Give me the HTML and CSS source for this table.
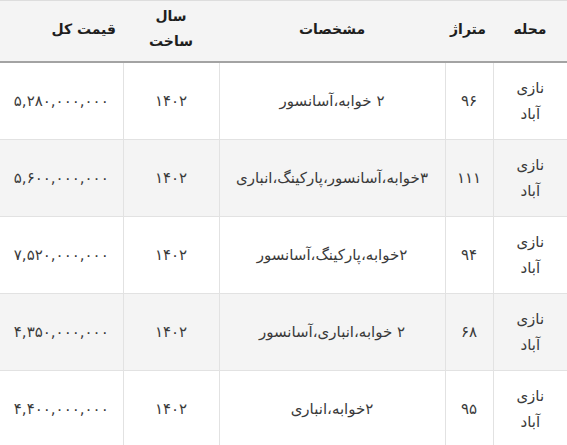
FILE: index.html
```html
<!DOCTYPE html>
<html lang="fa" dir="rtl">
<head>
<meta charset="utf-8">
<link rel="stylesheet" href="styles.css">
</head>
<body>
<table class="price-table">
  <colgroup>
    <col class="c-area">
    <col class="c-size">
    <col class="c-spec">
    <col class="c-year">
    <col class="c-price">
  </colgroup>
  <thead>
    <tr>
      <th>محله</th>
      <th>متراژ</th>
      <th>مشخصات</th>
      <th>سال<br>ساخت</th>
      <th class="th-price">قیمت کل</th>
    </tr>
  </thead>
  <tbody>
    <tr>
      <td>نازی<br>آباد</td>
      <td>۹۶</td>
      <td>۲ خوابه،آسانسور</td>
      <td>۱۴۰۲</td>
      <td>۵,۲۸۰,۰۰۰,۰۰۰</td>
    </tr>
    <tr>
      <td>نازی<br>آباد</td>
      <td>۱۱۱</td>
      <td>۳خوابه،آسانسور،پارکینگ،انباری</td>
      <td>۱۴۰۲</td>
      <td>۵,۶۰۰,۰۰۰,۰۰۰</td>
    </tr>
    <tr>
      <td>نازی<br>آباد</td>
      <td>۹۴</td>
      <td>۲خوابه،پارکینگ،آسانسور</td>
      <td>۱۴۰۲</td>
      <td>۷,۵۲۰,۰۰۰,۰۰۰</td>
    </tr>
    <tr>
      <td>نازی<br>آباد</td>
      <td>۶۸</td>
      <td>۲ خوابه،انباری،آسانسور</td>
      <td>۱۴۰۲</td>
      <td>۴,۳۵۰,۰۰۰,۰۰۰</td>
    </tr>
    <tr>
      <td>نازی<br>آباد</td>
      <td>۹۵</td>
      <td>۲خوابه،انباری</td>
      <td>۱۴۰۲</td>
      <td>۴,۴۰۰,۰۰۰,۰۰۰</td>
    </tr>
  </tbody>
</table>
</body>
</html>
```

FILE: styles.css
```css
html, body {
  margin: 0;
  padding: 0;
  background: #ffffff;
}
body {
  font-family: "DejaVu Sans", sans-serif;
  color: #3a3a3a;
}
.price-table {
  width: 567px;
  border-collapse: collapse;
  table-layout: fixed;
  font-size: 15px;
}
.c-area { width: 74px; }
.c-size { width: 48px; }
.c-spec { width: 226px; }
.c-year { width: 96px; }
.c-price { width: 123px; }

.price-table thead tr {
  background: #f4f4f4;
  border-top: 1px solid #dddddd;
  border-bottom: 2px solid #a3a3a3;
}
.price-table th {
  height: 56px;
  padding: 0 7px 4px;
  font-size: 14px;
  font-weight: bold;
  color: #1e1e1e;
  line-height: 25px;
  text-align: center;
  vertical-align: middle;
}
.price-table th.th-price {
  text-align: right;
}
.price-table td {
  height: 76px;
  padding: 0 8px;
  border: 1px solid #e2e2e2;
  border-top: none;
  line-height: 26px;
  text-align: center;
  vertical-align: middle;
}
.price-table tbody tr:nth-child(even) {
  background: #f4f4f4;
}
.price-table td:first-child { border-right: none; }
.price-table td:last-child { border-left: none; }
```
